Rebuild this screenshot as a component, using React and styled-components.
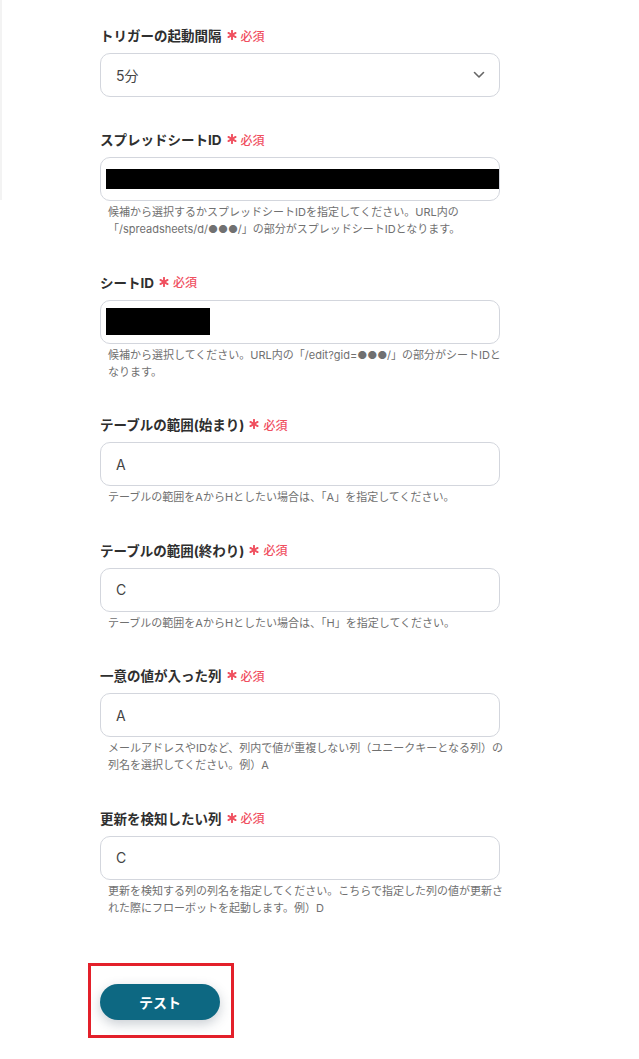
import React from 'react';
import styled, { createGlobalStyle } from 'styled-components';

const GlobalStyle = createGlobalStyle`
  body {
    margin: 0;
    background: #fff;
    font-family: "Inter", "Noto Sans CJK JP", "Noto Sans", sans-serif;
    color: #333;
  }
`;

const fields = [
  { label: 'スプレッドシートID', redact: 393, redactH: 20, help: ['候補から選択するかスプレッドシートIDを指定してください。URL内の', '「/spreadsheets/d/●●●/」の部分がスプレッドシートIDとなります。'] },
  { label: 'シートID', redact: 104, redactH: 27, help: ['候補から選択してください。URL内の「/edit?gid=●●●/」の部分がシートIDと', 'なります。'] },
  { label: 'テーブルの範囲(始まり)', value: 'A', help: ['テーブルの範囲をAからHとしたい場合は、「A」を指定してください。'] },
  { label: 'テーブルの範囲(終わり)', value: 'C', help: ['テーブルの範囲をAからHとしたい場合は、「H」を指定してください。'] },
  { label: '一意の値が入った列', value: 'A', help: ['メールアドレスやIDなど、列内で値が重複しない列（ユニークキーとなる列）の', '列名を選択してください。例）A'] },
  { label: '更新を検知したい列', value: 'C', help: ['更新を検知する列の列名を指定してください。こちらで指定した列の値が更新さ', 'れた際にフローボットを起動します。例）D'] },
];

const Required = () => (
  <Req>
    <svg width="10" height="10" viewBox="0 0 10 10">
      <g stroke="#f0505f" strokeWidth="1.9" strokeLinecap="round">
        <line x1="5" y1="0.8" x2="5" y2="9.2" />
        <line x1="1.4" y1="2.9" x2="8.6" y2="7.1" />
        <line x1="1.4" y1="7.1" x2="8.6" y2="2.9" />
      </g>
    </svg>
    必須
  </Req>
);

const App = () => {
  return (
    <>
      <GlobalStyle />
      <Page>
        <SideLine />
        <Form>
          <Field>
            <Label>トリガーの起動間隔<Required /></Label>
            <Input>
              <Value>5分</Value>
              <svg width="12" height="8" viewBox="0 0 12 8">
                <path d="M1.5 1.5 L6 6 L10.5 1.5" fill="none" stroke="#666" strokeWidth="1.6" strokeLinecap="round" strokeLinejoin="round" />
              </svg>
            </Input>
          </Field>
          {fields.map((f, i) => (
            <Field key={i}>
              <Label>{f.label}<Required /></Label>
              <Input $redacted={!!f.redact}>
                {f.redact
                  ? <Redact style={{ width: f.redact, height: f.redactH }} />
                  : <Value>{f.value}</Value>}
              </Input>
              <Help>
                {f.help.map((line, j) => (
                  <React.Fragment key={j}>{j > 0 && <br />}{line}</React.Fragment>
                ))}
              </Help>
            </Field>
          ))}
          <Highlight>
            <TestButton>テスト</TestButton>
          </Highlight>
        </Form>
      </Page>
    </>
  );
};

export default App;

const Page = styled.div`
  display: flex;
  align-items: flex-start;
  min-height: 1059px;
`;

const SideLine = styled.div`
  width: 2px;
  height: 200px;
  background: #f3f3f3;
  flex-shrink: 0;
`;

const Form = styled.div`
  width: 400px;
  margin-left: 98px;
  padding-top: 25px;
  display: flex;
  flex-direction: column;
`;

const Field = styled.div`
  display: flex;
  flex-direction: column;
  margin-bottom: 32px;
`;

const Label = styled.div`
  display: flex;
  align-items: center;
  height: 20px;
  font-size: 13.5px;
  font-weight: 700;
  color: #2f2f2f;
  margin-bottom: 8px;
`;

const Req = styled.span`
  display: inline-flex;
  align-items: center;
  gap: 4px;
  margin-left: 5px;
  font-size: 12px;
  font-weight: 500;
  color: #f0505f;
`;

const Input = styled.div`
  box-sizing: border-box;
  height: 44px;
  border: 1px solid #d3d6dd;
  border-radius: 10px;
  display: flex;
  align-items: center;
  justify-content: space-between;
  padding: ${p => (p.$redacted ? '0 0 0 5px' : '0 14px 0 15px')};
  overflow: hidden;
`;

const Value = styled.span`
  font-size: 14px;
  color: #444;
`;

const Redact = styled.div`
  background: #000;
`;

const Help = styled.div`
  margin-top: 3px;
  margin-bottom: 1.6px;
  padding-left: 8px;
  font-size: 11px;
  line-height: 17px;
  color: #707070;
  white-space: nowrap;
`;

const Highlight = styled.div`
  align-self: flex-start;
  margin-left: -12px;
  margin-top: 12px;
  border: 3px solid #e3202a;
  padding: 18px 11px 15px 9px;
`;

const TestButton = styled.button`
  width: 120px;
  height: 36px;
  border: 0;
  border-radius: 18px;
  background: #0d6882;
  color: #fff;
  font-family: "Inter", "Noto Sans CJK JP", "Noto Sans", sans-serif;
  font-size: 14px;
  font-weight: 700;
  box-shadow: 0 4px 12px rgba(40, 60, 80, 0.25);
  cursor: pointer;
`;
